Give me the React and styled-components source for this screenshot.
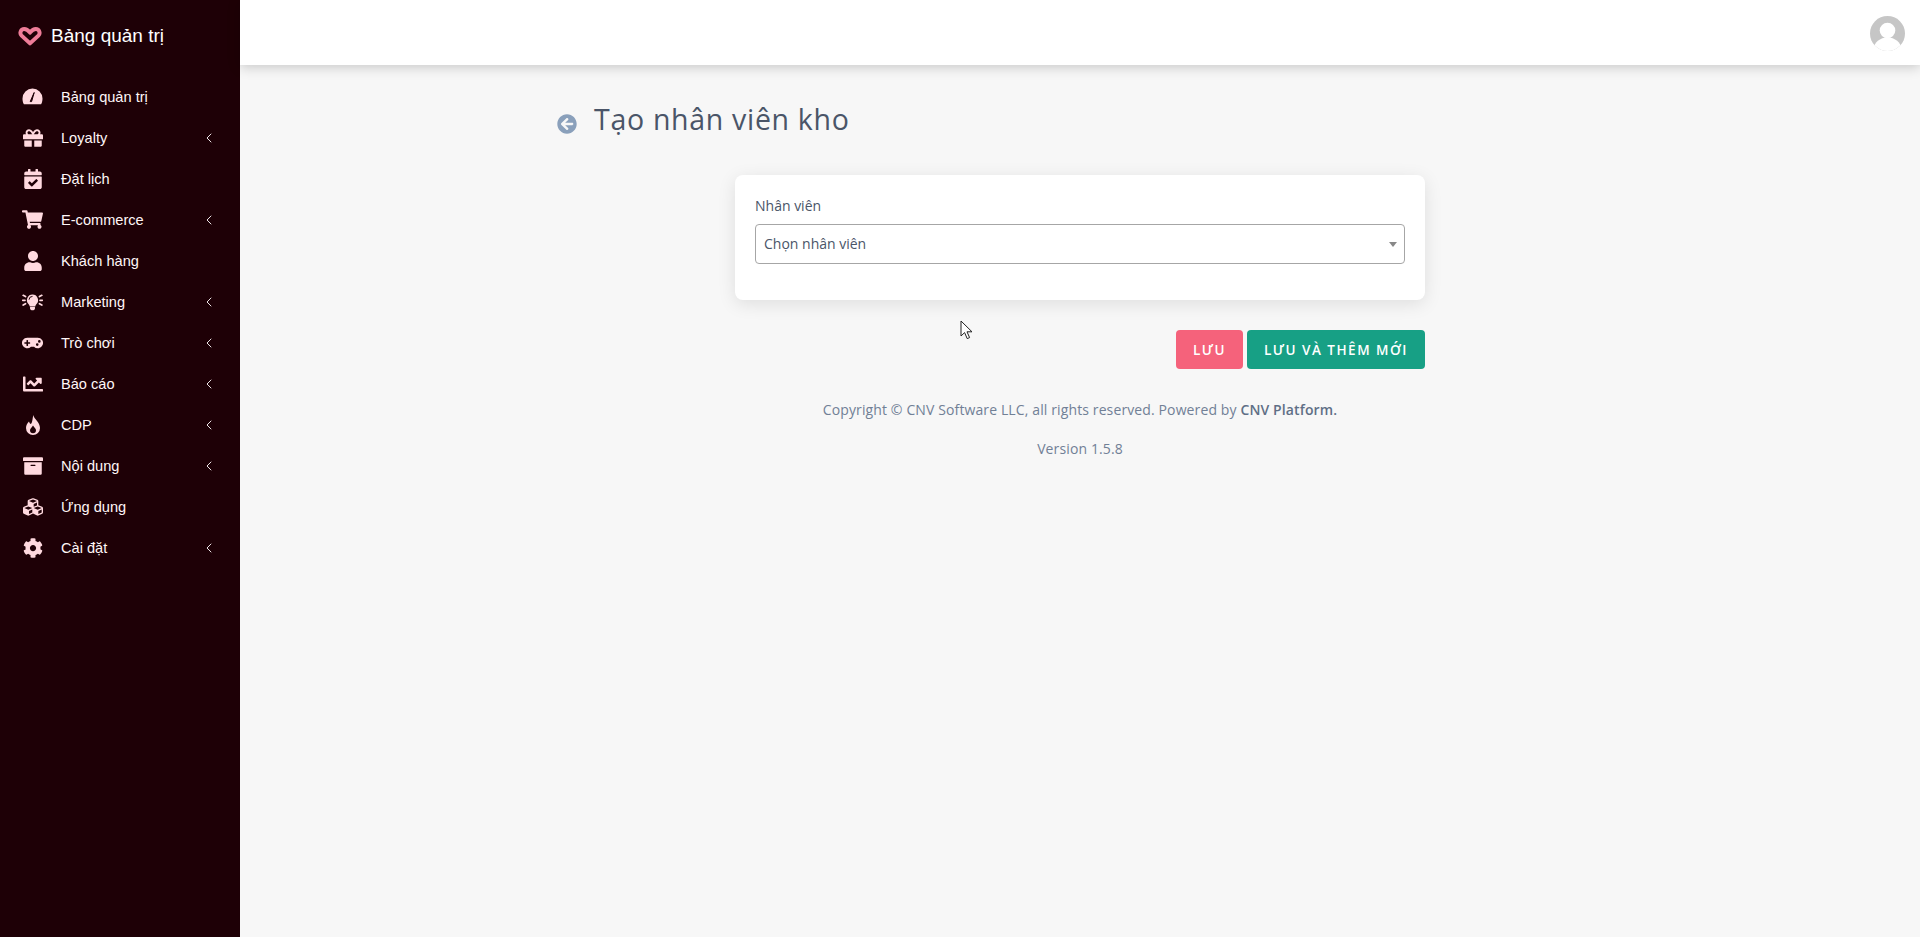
import React from 'react';
import styled, { createGlobalStyle } from 'styled-components';
import {
  FaGift,
  FaCalendarCheck,
  FaShoppingCart,
  FaUser,
  FaGamepad,
  FaChartLine,
  FaArchive,
  FaCubes,
  FaCog,
  FaArrowCircleLeft,
} from 'react-icons/fa';
import { ChevronLeft } from 'lucide-react';

const GlobalStyle = createGlobalStyle`
  html, body {
    margin: 0;
    padding: 0;
    height: 100%;
    background: #f7f7f7;
  }
  #root {
    height: 100%;
  }
`;

const Page = styled.div`
  display: flex;
  min-height: 937px;
  font-family: "Open Sans", "Noto Sans", sans-serif;
`;

const Sidebar = styled.aside`
  width: 240px;
  flex-shrink: 0;
  background: #1e0006;
  font-family: "Liberation Sans", Arial, sans-serif;
`;

const Brand = styled.div`
  display: flex;
  align-items: center;
  height: 71px;
  padding-left: 18px;
  gap: 9px;
  color: #fff;
  font-size: 19px;
`;

const Menu = styled.nav`
  display: flex;
  flex-direction: column;
  padding-top: 5px;
`;

const MenuItem = styled.div`
  display: flex;
  align-items: center;
  height: 41px;
  padding: 0 23px 0 22px;
  color: #fff6f7;
  font-size: 14.6px;
`;

const MenuIcon = styled.span`
  display: flex;
  align-items: center;
  justify-content: center;
  width: 21px;
  margin-right: 18px;
  color: #ffd9df;
  font-size: 20px;
`;

const MenuLabel = styled.span`
  flex: 1;
`;

const Caret = styled(ChevronLeft)`
  color: #eee6e8;
  width: 16px;
  height: 16px;
  stroke-width: 1.5;
`;

const Main = styled.main`
  flex: 1;
  display: flex;
  flex-direction: column;
  min-width: 0;
`;

const Header = styled.header`
  display: flex;
  align-items: center;
  justify-content: flex-end;
  height: 65px;
  padding-right: 15px;
  background: #fff;
  box-shadow: 0 2px 12px rgba(0, 0, 0, 0.2);
`;

const Avatar = styled.svg`
  width: 35px;
  height: 35px;
  margin-top: 1px;
`;

const TitleRow = styled.div`
  display: flex;
  align-items: center;
  height: 48px;
  margin: 30px 0 0 317px;
`;

const BackIcon = styled(FaArrowCircleLeft)`
  color: #8aa0bb;
  font-size: 20px;
  margin: 10px 17px 0 0;
`;

const Title = styled.h1`
  margin: 0;
  color: #4a5568;
  font-size: 28.5px;
  font-weight: 400;
  letter-spacing: 0.7px;
`;

const Form = styled.div`
  width: 690px;
  margin: 0 auto;
`;

const Card = styled.section`
  margin-top: 32px;
  height: 125px;
  box-sizing: border-box;
  padding: 21px 20px 20px;
  background: #fff;
  border-radius: 8px;
  box-shadow: 0 4px 18px rgba(0, 0, 0, 0.1);
`;

const Label = styled.div`
  color: #4a5568;
  font-size: 14px;
  line-height: 20px;
  margin-bottom: 8px;
`;

const Select = styled.div`
  display: flex;
  align-items: center;
  justify-content: space-between;
  box-sizing: border-box;
  height: 40px;
  padding: 0 7px 2px 8px;
  border: 1px solid #a6a6a6;
  border-radius: 4px;
  color: #4a5568;
  font-size: 14px;
`;

const Arrow = styled.span`
  width: 0;
  height: 0;
  margin-top: 2px;
  border-left: 4px solid transparent;
  border-right: 4px solid transparent;
  border-top: 5px solid #888;
`;

const Actions = styled.div`
  display: flex;
  justify-content: flex-end;
  gap: 4px;
  margin-top: 30px;
`;

const Button = styled.button`
  height: 39px;
  padding: 0 17px;
  border: 0;
  border-radius: 4px;
  background: ${(p) => p.$bg};
  color: #fff;
  font-family: inherit;
  font-size: 13.5px;
  font-weight: 600;
  letter-spacing: 1.5px;
`;

const Footer = styled.footer`
  text-align: center;
  color: #718096;
  font-size: 14px;
  line-height: 20px;
  letter-spacing: 0.12px;
`;

const FooterLine = styled.p`
  margin: ${(p) => p.$top}px 0 0;
`;

const Strong = styled.span`
  font-weight: 600;
  color: #5f6f86;
`;

const Cursor = styled.svg`
  position: fixed;
  left: 960px;
  top: 320px;
  width: 14px;
  height: 21px;
`;

const Gauge = () => (
  <svg width="21" height="17" viewBox="0 0 21 17">
    <path d="M10.5 0.5A10 10 0 0 0 0.5 10.5c0 2.2.4 4 1.4 5.8h17.2c1-1.8 1.4-3.6 1.4-5.8A10 10 0 0 0 10.5 0.5z" fill="currentColor" />
    <path d="M12.2 4.5 9.6 13.6h-1.4z" fill="#1e0006" stroke="#1e0006" strokeWidth="1" strokeLinejoin="round" />
  </svg>
);

const Bulb = () => (
  <svg width="24" height="20" viewBox="0 0 24 20" fill="currentColor">
    <path d="M12 1.4a6.4 6.4 0 0 0-4.6 10.8c.8.9 1.3 1.9 1.5 2.8h6.2c.2-.9.7-1.9 1.5-2.8A6.4 6.4 0 0 0 12 1.4z" />
    <path d="M9.2 15.8h5.6v1.8c0 .8-1.2 1.9-2.8 1.9s-2.8-1.1-2.8-1.9z" />
    <path
      d="M1.4 2.4l2.6 1.4M0.8 8h2.6M1.4 13.4l2.6-1.4M22.6 2.4l-2.6 1.4M23.2 8h-2.6M22.6 13.4l-2.6-1.4"
      stroke="currentColor"
      strokeWidth="2"
      strokeLinecap="round"
    />
    <path d="M12 3.6a4 4 0 0 0-4 3.8" stroke="#1e0006" strokeWidth="1.1" fill="none" />
  </svg>
);

const Flame = () => (
  <svg width="16" height="20" viewBox="0 0 16 20">
    <path d="M8.4 0C8.8 4 15 7 15 13a7 7 0 0 1-14 0C1 10 2.5 8 4 6.5 4.5 8 5 9 6 9 7.6 7 7.4 3 8.4 0z" fill="currentColor" />
    <path d="M8 10.5c1 1.8 3 3 3 4.8a3 3 0 0 1-6 0c0-1.8 2-3 3-4.8z" fill="#1e0006" />
  </svg>
);

const menu = [
  { label: 'Bảng quản trị', icon: <Gauge /> },
  { label: 'Loyalty', icon: <FaGift />, sub: true },
  { label: 'Đặt lịch', icon: <FaCalendarCheck /> },
  { label: 'E-commerce', icon: <FaShoppingCart size={21} />, sub: true },
  { label: 'Khách hàng', icon: <FaUser /> },
  { label: 'Marketing', icon: <Bulb />, sub: true },
  { label: 'Trò chơi', icon: <FaGamepad size={24} />, sub: true },
  { label: 'Báo cáo', icon: <FaChartLine />, sub: true },
  { label: 'CDP', icon: <Flame />, sub: true },
  { label: 'Nội dung', icon: <FaArchive />, sub: true },
  { label: 'Ứng dụng', icon: <FaCubes /> },
  { label: 'Cài đặt', icon: <FaCog />, sub: true },
];

const App = () => {
  return (
    <Page>
      <GlobalStyle />
      <Sidebar>
        <Brand>
          <svg width="24" height="20" viewBox="0 0 24 20" fill="none">
            <path
              d="M12 17.4 3.6 9.6C1.2 7.2 2.8 3 6.2 3 8.6 3 10.4 4.6 12 6.6 13.6 4.6 15.4 3 17.8 3c3.4 0 5 4.2 2.6 6.6z"
              stroke="#ee7c98"
              strokeWidth="4"
              strokeLinejoin="round"
            />
          </svg>
          Bảng quản trị
        </Brand>
        <Menu>
          {menu.map((item) => (
            <MenuItem key={item.label}>
              <MenuIcon>{item.icon}</MenuIcon>
              <MenuLabel>{item.label}</MenuLabel>
              {item.sub && <Caret />}
            </MenuItem>
          ))}
        </Menu>
      </Sidebar>
      <Main>
        <Header>
          <Avatar viewBox="0 0 36 36">
            <defs>
              <clipPath id="avatar-clip">
                <circle cx="18" cy="18" r="18" />
              </clipPath>
            </defs>
            <g clipPath="url(#avatar-clip)">
              <rect width="36" height="36" fill="#c6c6c6" />
              <circle cx="18" cy="15" r="8" fill="#fff" />
              <ellipse cx="18" cy="34" rx="14" ry="12" fill="#fff" />
            </g>
          </Avatar>
        </Header>
        <TitleRow>
          <BackIcon />
          <Title>Tạo nhân viên kho</Title>
        </TitleRow>
        <Form>
          <Card>
            <Label>Nhân viên</Label>
            <Select>
              Chọn nhân viên
              <Arrow />
            </Select>
          </Card>
          <Actions>
            <Button $bg="#f5627b">LƯU</Button>
            <Button $bg="#17a085">LƯU VÀ THÊM MỚI</Button>
          </Actions>
          <Footer>
            <FooterLine $top={31}>
              Copyright © CNV Software LLC, all rights reserved. Powered by <Strong>CNV Platform.</Strong>
            </FooterLine>
            <FooterLine $top={19}>Version 1.5.8</FooterLine>
          </Footer>
        </Form>
      </Main>
      <Cursor viewBox="0 0 14 21">
        <path d="M1 1v15l3.6-3.4 2.6 6 2.4-1-2.6-5.8h5z" fill="#fff" stroke="#222" strokeWidth="1" />
      </Cursor>
    </Page>
  );
};

export default App;
